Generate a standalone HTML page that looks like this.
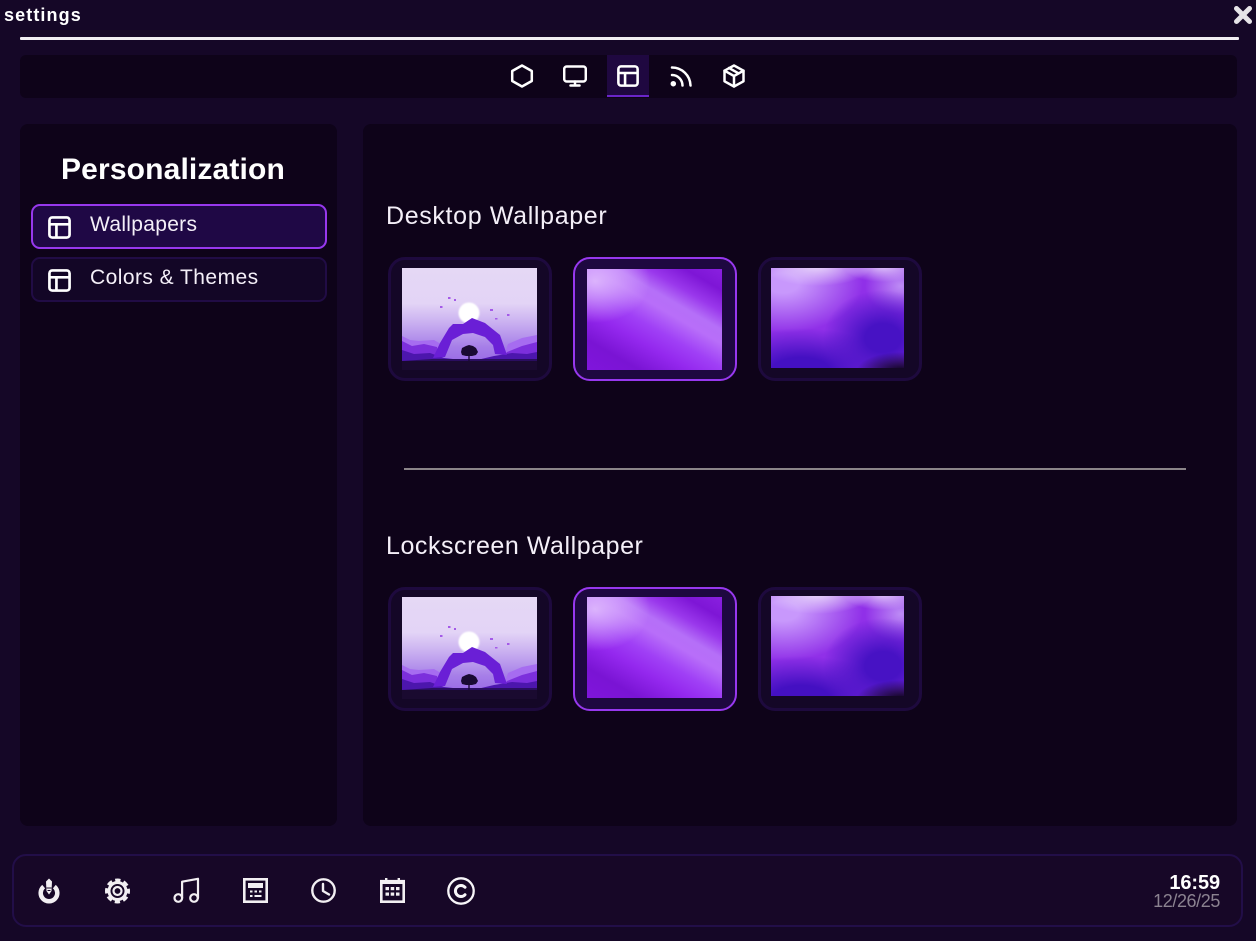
<!DOCTYPE html>
<html><head><meta charset="utf-8">
<style>
html,body{margin:0;padding:0;width:1256px;height:941px;overflow:hidden;background:#150727}
body{position:relative;font-family:"Liberation Sans",sans-serif;color:#fff}
.a{position:absolute;box-sizing:border-box}
.t{position:absolute;white-space:nowrap;line-height:1}
.thumb{position:absolute;box-sizing:border-box;width:164px;height:124px;border-radius:17px;border:3px solid #1e0a3e;background:#140727}
.thumb.on{border:2.500px solid #9738ee;background:#1e0840}
.w2{position:absolute;width:135px;height:101px;background:
radial-gradient(ellipse 55px 42px at 8px 12px,rgba(222,184,253,.95) 0%,rgba(222,184,253,.6) 40%,rgba(222,184,253,0) 100%),
linear-gradient(30deg,#8015dc 0%,#7a14d4 17%,#9428ee 33%,#a040f6 45%,#b86ef9 58%,#b56ff8 66%,#9a38ec 76%,#7e16d6 88%,#8a20e0 100%)}
.w3{position:absolute;width:133px;height:100px;background:
radial-gradient(ellipse 45px 20px at 130px 104px,#10051f 10%,rgba(16,5,31,0)),
radial-gradient(ellipse 55px 20px at 46px -2px,rgba(235,220,250,.95) 0%,rgba(235,220,250,0) 100%),
radial-gradient(ellipse 40px 16px at 112px -2px,rgba(228,208,250,.95) 0%,rgba(228,208,250,0) 100%),
radial-gradient(ellipse 60px 48px at 112px 70px,#4712c4 30%,rgba(71,18,196,0) 100%),
radial-gradient(ellipse 95px 42px at 30px 102px,#4410c2 30%,rgba(68,16,194,0) 100%),
radial-gradient(ellipse 80px 50px at 12px 15px,#c898fc 20%,rgba(200,152,252,0) 100%),
radial-gradient(ellipse 36px 28px at 130px 18px,#bd8cf5,rgba(189,140,245,0)),
#9030e8}
svg{position:absolute;display:block;overflow:hidden}
.ic{fill:none;stroke:#fff;stroke-width:2.500;stroke-linecap:round;stroke-linejoin:round}
</style></head><body>
<svg width="0" height="0" style="position:absolute">
<defs>
<linearGradient id="sky" x1="0" y1="0" x2="0" y2="1">
<stop offset="0" stop-color="#e5d8f5"/><stop offset=".38" stop-color="#e3d4f6"/><stop offset=".6" stop-color="#c8aef0"/><stop offset=".85" stop-color="#a67ee8"/><stop offset="1" stop-color="#9a6ce5"/>
</linearGradient>
<filter id="b1" x="-50%" y="-50%" width="200%" height="200%"><feGaussianBlur stdDeviation=".8"/></filter>
<symbol id="w1" viewBox="0 0 135 102">
<rect width="135" height="102" fill="#140727"/>
<rect width="135" height="93" fill="url(#sky)"/>
<circle cx="67" cy="45" r="10.500" fill="#fff" filter="url(#b1)"/>
<g fill="#a45ae8"><rect x="46" y="29" width="2.500" height="2"/><rect x="52" y="31" width="2" height="2"/><rect x="38" y="38" width="2.500" height="2"/><rect x="88" y="41" width="3" height="2"/><rect x="93" y="50" width="2.500" height="1.500"/><rect x="105" y="46" width="2.500" height="2"/></g>
<path d="M0 68L8 72 17 73 32 72 42 78 40 93 0 93Z" fill="#a66cf0"/>
<path d="M135 67L120 70 106 76 100 93 135 93Z" fill="#a66cf0"/>
<path d="M0 73L10 78 22 76 35 79 38 93 0 93Z" fill="#7c2fdc"/>
<path d="M135 74L120 78 105 84 100 93 135 93Z" fill="#7c2fdc"/>
<path d="M0 82L12 86 28 85 42 90 60 92 75 92 92 88 110 85 125 86 135 84 135 93 0 93Z" fill="#4c16ad"/>
<path d="M31 90L38 75 47 60 51 56 61 56 70 50 83 55 98 67 105 87 93 86 91 77 83 69 71 65 61 66 50 72 43 89Z" fill="#6a1fd6"/>
<path d="M0 93L30 91 135 91 135 93Z" fill="#2a0d60"/>
<path d="M59 84L60 80 64 78 67 77 71 78 74 80 76 84 74 87 70 88 64 88 60 87Z" fill="#1a0a33"/><rect x="66.300" y="84" width="1.400" height="9" fill="#1a0a33"/>
<rect y="93" width="135" height="9" fill="#1a0a30"/>
</symbol>
<symbol id="layout" viewBox="0 0 24 24"><rect x="1.500" y="1.500" width="21" height="21" rx="3" fill="none" stroke="#fff" stroke-width="2.800"/><path d="M1.500 8.700H22.500M8.800 8.700V22.500" fill="none" stroke="#fff" stroke-width="2.800"/></symbol>
</defs>
</svg>

<div class="t" style="left:4px;top:6px;font-size:18px;font-weight:700;letter-spacing:1.100px">settings</div>
<svg style="left:1233px;top:5px" width="21" height="21" viewBox="0 0 21 21"><path d="M3.500 3.500L16.500 16.500M16.500 3.500L3.500 16.500" stroke="#e6e4e8" stroke-width="5" stroke-linecap="round"/></svg>
<div class="a" style="left:20px;top:37px;width:1219px;height:3px;background:#f1eef3;border-radius:1px"></div>

<div class="a" style="left:20px;top:55px;width:1217px;height:43px;background:#0e0319;border-radius:6px"></div>
<div class="a" style="left:607px;top:55px;width:42px;height:42px;background:#1f0840;border-bottom:2px solid #6a25c9"></div>
<svg class="ic" style="left:510px;top:64px" width="24" height="24" viewBox="0 0 24 24"><path d="M12 1.500L21.800 7V17L12 22.500 2.200 17V7Z"/></svg>
<svg class="ic" style="left:563px;top:64px" width="24" height="24" viewBox="0 0 24 24"><rect x="1.200" y="2.500" width="21.600" height="15" rx="2.500"/><path d="M12 17.500V21.500M7.500 21.500H16.500"/></svg>
<svg style="left:617px;top:65px" width="22" height="22"><use href="#layout" width="22" height="22"/></svg>
<svg class="ic" style="left:669px;top:64px" width="24" height="24" viewBox="0 0 24 24" stroke-width="2.700"><circle cx="4.300" cy="19.700" r="1.500" fill="#fff"/><path d="M3 11A10.500 10.500 0 0 1 13.500 21.500M3 3.500A18.500 18.500 0 0 1 21.500 21.500"/></svg>
<svg class="ic" style="left:722px;top:64px" width="24" height="24" viewBox="0 0 24 24"><path d="M12 1.500L21.500 6.700V17.300L12 22.500 2.500 17.300V6.700Z"/><path d="M2.500 6.700L12 12 21.500 6.700M12 12V22.500M7 4L16.500 9.300"/></svg>

<div class="a" style="left:20px;top:124px;width:317px;height:702px;background:#0e0319;border-radius:8px"></div>
<div class="a" style="left:363px;top:124px;width:874px;height:702px;background:#0e0319;border-radius:8px"></div>

<div class="t" style="left:61px;top:155px;font-size:30px;font-weight:700;letter-spacing:.15px">Personalization</div>
<div class="a" style="left:31px;top:204px;width:296px;height:45px;background:#1f0845;border:2.500px solid #9738ee;border-radius:9px"></div>
<svg style="left:48px;top:216px" width="23" height="23"><use href="#layout" width="23" height="23"/></svg>
<div class="t" style="left:90px;top:214px;font-size:21px;letter-spacing:.3px;color:#f4eff8">Wallpapers</div>
<div class="a" style="left:31px;top:257px;width:296px;height:45px;background:#130626;border:2.500px solid #210c45;border-radius:9px"></div>
<svg style="left:48px;top:269px" width="23" height="23"><use href="#layout" width="23" height="23"/></svg>
<div class="t" style="left:90px;top:267px;font-size:21px;letter-spacing:.45px;color:#f4eff8">Colors &amp; Themes</div>

<div class="t" style="left:386px;top:204px;font-size:25px;letter-spacing:.65px;color:#f4eff8">Desktop Wallpaper</div>
<div class="thumb" style="left:388px;top:257px"></div>
<svg style="left:402px;top:268px" width="135" height="102"><use href="#w1" width="135" height="102"/></svg>
<div class="thumb on" style="left:573px;top:257px"></div>
<div class="w2" style="left:587px;top:269px"></div>
<div class="thumb" style="left:758px;top:257px"></div>
<div class="w3" style="left:771px;top:268px"></div>

<div class="a" style="left:404px;top:468px;width:782px;height:2px;background:#8b8589"></div>

<div class="t" style="left:386px;top:534px;font-size:25px;letter-spacing:.55px;color:#f4eff8">Lockscreen Wallpaper</div>
<div class="thumb" style="left:388px;top:587px"></div>
<svg style="left:402px;top:597px" width="135" height="102"><use href="#w1" width="135" height="102"/></svg>
<div class="thumb on" style="left:573px;top:587px"></div>
<div class="w2" style="left:587px;top:597px"></div>
<div class="thumb" style="left:758px;top:587px"></div>
<div class="w3" style="left:771px;top:596px"></div>

<div class="a" style="left:12px;top:854px;width:1231px;height:73px;background:#170727;border:2px solid #220e48;border-radius:14px"></div>

<svg style="left:37px;top:878px" width="24" height="26" viewBox="0 0 24 26"><path d="M6.700 8.600A8.300 8.300 0 1 0 17.300 8.600" fill="none" stroke="#f2eff2" stroke-width="4.500"/><path d="M12 .5L15 3.500 14.800 7.500 14.500 13 12 16.500 9.500 13 9.200 7.500 9 3.500Z" fill="#f2eff2"/><path d="M9.500 10H14.500M10.500 12.500H13.500" stroke="#170727" stroke-width="1"/></svg>
<svg style="left:105px;top:878px" width="25" height="26" viewBox="0 0 25 26"><circle cx="12.500" cy="13" r="8.500" fill="none" stroke="#f2eff2" stroke-width="3"/><circle cx="12.500" cy="13" r="10.800" fill="none" stroke="#f2eff2" stroke-width="3.400" stroke-dasharray="5.200 3.280" stroke-dashoffset="2.600"/><circle cx="12.500" cy="13" r="4" fill="none" stroke="#f2eff2" stroke-width="2.200"/></svg>
<svg style="left:173px;top:877px" width="28" height="28" viewBox="0 0 28 28" fill="none" stroke="#f2eff2" stroke-width="2.200" stroke-linecap="round" stroke-linejoin="round"><circle cx="5.300" cy="21" r="3.800"/><circle cx="21" cy="21" r="3.800"/><path d="M9.100 21V4.700L25 1.800V21"/></svg>
<svg style="left:243px;top:878px" width="25" height="25" viewBox="0 0 25 25"><rect x="1.300" y="1.300" width="22.400" height="22.400" fill="none" stroke="#f2eff2" stroke-width="2.600"/><rect x="5" y="5" width="15" height="5" fill="#f2eff2"/><g fill="#f2eff2"><rect x="7" y="12.500" width="2.500" height="2"/><rect x="11.500" y="12.500" width="2.500" height="2"/><rect x="16" y="12.500" width="2.500" height="2"/><rect x="7" y="17" width="2.500" height="2"/><rect x="11.500" y="17" width="7" height="2"/></g></svg>
<svg style="left:311px;top:878px" width="25" height="25" viewBox="0 0 25 25" fill="none" stroke="#f2eff2" stroke-width="2.400" stroke-linecap="round" stroke-linejoin="round"><circle cx="12.500" cy="12.500" r="11.200"/><path d="M12 6V13L18 16.500"/></svg>
<svg style="left:380px;top:878px" width="25" height="25" viewBox="0 0 25 25"><rect x="1.300" y="3.200" width="22.400" height="20.500" fill="none" stroke="#f2eff2" stroke-width="2.600"/><rect x="5" y="0" width="2.400" height="4" fill="#f2eff2"/><rect x="17.600" y="0" width="2.400" height="4" fill="#f2eff2"/><rect x="1" y="3" width="23" height="3" fill="#f2eff2"/><g fill="#f2eff2"><rect x="5.500" y="9" width="3.500" height="3.200"/><rect x="10.700" y="9" width="3.500" height="3.200"/><rect x="16" y="9" width="3.500" height="3.200"/><rect x="5.500" y="14.500" width="3.500" height="3.200"/><rect x="10.700" y="14.500" width="3.500" height="3.200"/><rect x="16" y="14.500" width="3.500" height="3.200"/></g></svg>
<svg style="left:447px;top:877px" width="28" height="28" viewBox="0 0 28 28" fill="none" stroke="#f7f5f8" stroke-width="2.300" stroke-linecap="round"><circle cx="14" cy="14" r="12.700"/><path d="M18 10.300A5.500 5.500 0 1 0 18 17.700" stroke-width="3"/></svg>

<div class="t" style="right:36px;top:873px;font-size:20px;font-weight:700;letter-spacing:-.1px">16:59</div>
<div class="t" style="right:36px;top:892px;font-size:18px;color:#8b8290;letter-spacing:-.4px">12/26/25</div>
</body></html>
